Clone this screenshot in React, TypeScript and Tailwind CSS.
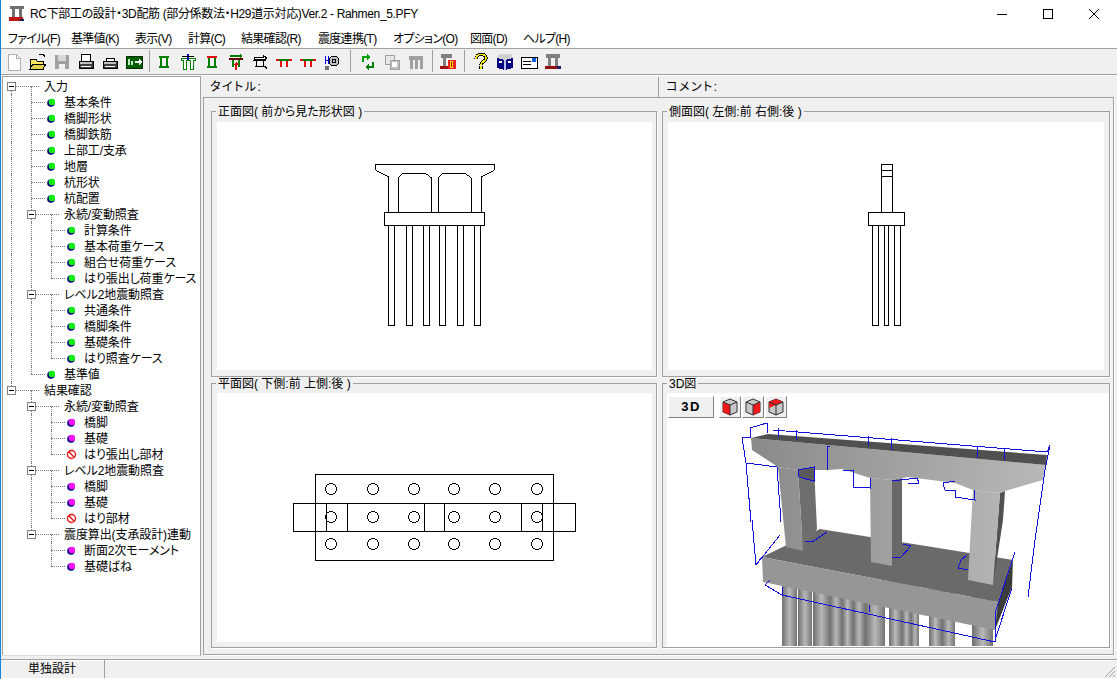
import type { ReactNode } from 'react';

type Mark = 'green' | 'pink' | 'no';
interface TreeItem {
  label: string;
  mark?: Mark;
  children?: TreeItem[];
}

const tree: TreeItem[] = [
  {
    label: '入力',
    children: [
      { label: '基本条件', mark: 'green' },
      { label: '橋脚形状', mark: 'green' },
      { label: '橋脚鉄筋', mark: 'green' },
      { label: '上部工/支承', mark: 'green' },
      { label: '地層', mark: 'green' },
      { label: '杭形状', mark: 'green' },
      { label: '杭配置', mark: 'green' },
      {
        label: '永続/変動照査',
        children: [
          { label: '計算条件', mark: 'green' },
          { label: '基本荷重ケース', mark: 'green' },
          { label: '組合せ荷重ケース', mark: 'green' },
          { label: 'はり張出し荷重ケース', mark: 'green' },
        ],
      },
      {
        label: 'レベル2地震動照査',
        children: [
          { label: '共通条件', mark: 'green' },
          { label: '橋脚条件', mark: 'green' },
          { label: '基礎条件', mark: 'green' },
          { label: 'はり照査ケース', mark: 'green' },
        ],
      },
      { label: '基準値', mark: 'green' },
    ],
  },
  {
    label: '結果確認',
    children: [
      {
        label: '永続/変動照査',
        children: [
          { label: '橋脚', mark: 'pink' },
          { label: '基礎', mark: 'pink' },
          { label: 'はり張出し部材', mark: 'no' },
        ],
      },
      {
        label: 'レベル2地震動照査',
        children: [
          { label: '橋脚', mark: 'pink' },
          { label: '基礎', mark: 'pink' },
          { label: 'はり部材', mark: 'no' },
        ],
      },
      {
        label: '震度算出(支承設計)連動',
        children: [
          { label: '断面2次モーメント', mark: 'pink' },
          { label: '基礎ばね', mark: 'pink' },
        ],
      },
    ],
  },
];

const menus = [
  { label: 'ファイル(F)', w: 'w-[63px]' },
  { label: '基準値(K)', w: 'w-[64px]' },
  { label: '表示(V)', w: 'w-[53px]' },
  { label: '計算(C)', w: 'w-[53px]' },
  { label: '結果確認(R)', w: 'w-[77px]' },
  { label: '震度連携(T)', w: 'w-[75px]' },
  { label: 'オプション(O)', w: 'w-[77px]' },
  { label: '図面(D)', w: 'w-[53px]' },
  { label: 'ヘルプ(H)', w: 'w-[60px]' },
];

function MarkIcon({ mark }: { mark: Mark }) {
  if (mark === 'no') {
    return (
      <svg width="11" height="11" viewBox="0 0 11 11" className="block">
        <circle cx="5.5" cy="5.5" r="4" fill="#fff" stroke="#f01010" strokeWidth="1.3" />
        <path d="M2.8 2.8L8.2 8.2" stroke="#f01010" strokeWidth="1.3" />
      </svg>
    );
  }
  return (
    <svg width="9" height="9" viewBox="0 0 9 9" className="block">
      <circle cx="4" cy="5" r="3.8" fill="#000080" />
      <circle cx="4.9" cy="4" r="3.2" fill={mark === 'green' ? '#10f010' : '#ff10ff'} />
    </svg>
  );
}

function TreeRows({ items, depth, guides }: { items: TreeItem[]; depth: number; guides: boolean[] }) {
  return (
    <>
      {items.map((item, i) => {
        const hasNext = i < items.length - 1;
        const up = depth > 0 || i > 0;
        return (
          <div key={item.label + i}>
            <div className="flex h-4">
              {guides.map((g, k) => (
                <span key={k} className="relative w-5 shrink-0">
                  {g && <span className="absolute left-2 top-0 h-4 border-l border-dotted border-[#808080]" />}
                </span>
              ))}
              <span className="relative w-5 shrink-0">
                {up && <span className="absolute left-2 top-0 h-2 border-l border-dotted border-[#808080]" />}
                {hasNext && <span className="absolute left-2 top-2 h-2 border-l border-dotted border-[#808080]" />}
                <span className={`absolute left-2 top-2 border-t border-dotted border-[#808080] ${item.children ? 'w-7' : 'w-[14px]'}`} />
                {item.children && <span className="absolute left-[28px] top-2 h-2 border-l border-dotted border-[#808080]" />}
                {item.children && (
                  <span className="absolute left-[4px] top-[4px] flex h-[9px] w-[9px] items-center justify-center border border-[#808080] bg-white">
                    <span className="h-px w-[5px] bg-black" />
                  </span>
                )}
                {item.mark && (
                  <span className="absolute left-[28px] top-2 flex h-0 w-0 items-center justify-center">
                    <span className="shrink-0">
                      <MarkIcon mark={item.mark} />
                    </span>
                  </span>
                )}
              </span>
              <span className="ml-[21px] whitespace-nowrap pt-px text-[12px] leading-4 tracking-[-0.1px] text-black">{item.label}</span>
            </div>
            {item.children && <TreeRows items={item.children} depth={depth + 1} guides={[...guides, hasNext]} />}
          </div>
        );
      })}
    </>
  );
}

function Ico({ children }: { children: ReactNode }) {
  return (
    <span className="flex h-6 w-6 shrink-0 items-center justify-center">
      <svg width="18" height="18" viewBox="0 0 18 18" shapeRendering="crispEdges">
        {children}
      </svg>
    </span>
  );
}

function Sep({ w }: { w: string }) {
  return (
    <span className={`flex h-6 shrink-0 justify-center ${w}`}>
      <span className="h-[22px] w-px bg-[#a0a0a0]" />
    </span>
  );
}

function Printer({ flat }: { flat?: boolean }) {
  return (
    <Ico>
      {!flat && <path d="M5 1h9l-1 8H4z" fill="#fff" stroke="#000" />}
      {flat && <path d="M5 5h8v3H5z" fill="#fff" stroke="#000" />}
      <path d="M2 8h14v7H2z" fill="#404040" stroke="#000" />
      <path d="M3 9h12v2H3z" fill="#c0c0c0" />
      <path d="M4 13h10v1H4z" fill="#fff" />
    </Ico>
  );
}

function Toolbar() {
  const g = '#008000';
  const r = '#e01010';
  return (
    <div className="flex h-[26px] items-center border-t border-[#a0a0a0] bg-[#f0f0f0] pl-[1px]">
      <Ico><path d="M3 1h8l4 4v12H3z" fill="#fff" stroke="#b0b0b0" /><path d="M11 1v4h4" fill="none" stroke="#b0b0b0" /></Ico>
      <Ico><path d="M1 6h6l1 2h6v8H1z" fill="#ffe860" stroke="#000" /><path d="M4 11h13l-3 5H1z" fill="#e0d050" stroke="#000" /><path d="M10 1h4l2 3" fill="none" stroke="#000" /></Ico>
      <Ico><path d="M2 2h14v14H2z" fill="#a0a0a0" /><path d="M5 2h8v6H5z" fill="#d8d8d8" /><path d="M6 11h6v5H6z" fill="#f0f0f0" /></Ico>
      <Printer />
      <Printer flat />
      <Ico><path d="M1 3h16v12H1z" fill="#006000" stroke="#003000" /><path d="M3 6h2v6H3zM6 8h2v4H6z" fill="#c0f0c0" /><path d="M10 8h4V6l3 3-3 3v-2h-4z" fill="#fff" /></Ico>
      <Sep w="w-[6px]" />
      <Ico><path d="M4 4h10M4 14h10M6 4v10M12 4v10" fill="none" stroke={g} strokeWidth="2" /></Ico>
      <Ico><path d="M2 5h14v2H2z" fill="#fff" stroke={g} /><path d="M4 7v9h3V7M11 7v9h3V7" fill="#fff" stroke={g} /><path d="M8 1h2v6H8z" fill="#0000c0" /><path d="M3 3h12" stroke="#000" /></Ico>
      <Ico><path d="M4 4h10" stroke={r} strokeWidth="2" /><path d="M4 14h10M6 5v9M12 5v9" fill="none" stroke={g} strokeWidth="2" /></Ico>
      <Ico><path d="M2 5h14v2H2z" fill="#700000" /><path d="M5 7h2v7H5zM11 7h2v7h-2z" fill={g} /><path d="M3 2h10v-1l3 2-3 2v-1H3z" fill={g} /><path d="M9 9l3 3h-2v5H8v-5H6z" fill={r} /></Ico>
      <Ico><path d="M2 7h13M5 7v7M12 7v7" fill="none" stroke="#000" /><path d="M3 4h9V2l4 3-4 3V6H3z" fill="#fff" stroke="#000" /><path d="M4 13h10l2 3" fill="none" stroke="#000" /></Ico>
      <Ico><path d="M2 6h14v2H2z" fill={g} /><path d="M1 6h3v2H1zM14 6h3v2h-3z" fill={r} /><path d="M5 8h2v6H5zM11 8h2v6h-2z" fill={r} /></Ico>
      <Ico><path d="M2 6h14v2H2z" fill={g} /><path d="M1 6h3v2H1zM14 6h3v2h-3z" fill={r} /><path d="M5 8h2v6H5zM11 8h2v6h-2z" fill={r} /></Ico>
      <Ico><path d="M2 3v8M5 3v8M2 7h3" stroke="#0000e0" fill="none" /><circle cx="11" cy="8" r="5" fill="#c0c0c0" stroke="#000" /><circle cx="11" cy="8" r="2" fill="none" stroke="#000" /><path d="M2 13h4v4H2z" fill="#707070" /></Ico>
      <Sep w="w-3" />
      <Ico><path d="M4 9V4h5" fill="none" stroke="#00a000" strokeWidth="2" /><path d="M8 1l4 3-4 3z" fill="#00a000" /><path d="M14 9v5H9" fill="none" stroke="#008000" strokeWidth="2" /><path d="M10 11l-4 3 4 3z" fill="#008000" /></Ico>
      <Ico><path d="M2 2h9v9H2z" fill="#e8e8e8" stroke="#a0a0a0" /><path d="M7 7h9v9H7z" fill="#c0c0c0" stroke="#a0a0a0" /><path d="M9 9h5v5H9z" fill="#fff" /></Ico>
      <Ico><path d="M2 3h14v4H2zM3 7h3v9H3zM8 7h3v9H8zM13 7h3v9h-3z" fill="#a0a0a0" /></Ico>
      <Sep w="w-2" />
      <Ico><path d="M2 1h11v4H2zM4 5h3v8H4z" fill="#808080" /><path d="M1 13h16v3H1z" fill="#a01010" /><path d="M9 7h8v9H9z" fill="#f02020" /><path d="M11 8h3v7h-3z" fill="#ffe000" /><path d="M12 9h1v5h-1z" fill="#a01010" /></Ico>
      <Sep w="w-[9px]" />
      <Ico><path d="M4 6c0-6 10-6 10-1 0 4-5 3-5 7M9 13v3" fill="none" stroke="#000" strokeWidth="3.4" /><path d="M4 6c0-6 10-6 10-1 0 4-5 3-5 7M9 13v3" fill="none" stroke="#f8f000" strokeWidth="1.6" /></Ico>
      <Ico><path d="M1 5l8 2 8-2v10l-8 2-8-2z" fill="#000080" /><path d="M3 1h12l2 4-8 2-8-2z" fill="#d0d0d0" /><path d="M8 7h2v10H8z" fill="#c0c0f0" /><path d="M3 8h3v2H3zM12 8h3v2h-3z" fill="#fff" /></Ico>
      <Ico><path d="M1 4h16v11H1z" fill="#fff" stroke="#000" /><path d="M3 8h8v1H3zM3 11h8v1H3z" fill="#000" /><path d="M12 5h4v4h-4z" fill="#1060e0" /></Ico>
      <Ico><path d="M2 1h14v4H2zM4 5h3v8H4zM11 5h3v8h-3z" fill="#808080" /><path d="M1 13h13v3H1z" fill="#901010" /><path d="M13 13h4v3h-4z" fill="#202060" /></Ico>
    </div>
  );
}

function GroupBox({ title, children, className }: { title: string; children: ReactNode; className?: string }) {
  return (
    <div className={`relative border border-[#a0a0a0] shadow-[1px_1px_0_#fff] ${className ?? ''}`}>
      <span className="absolute left-[4px] top-[-7px] whitespace-nowrap bg-[#f0f0f0] px-[2px] text-[12px] leading-[15px]">{title}</span>
      {children}
    </div>
  );
}

function Canvas({ viewBox, children }: { viewBox: string; children: ReactNode }) {
  return (
    <svg viewBox={viewBox} className="block h-full w-full bg-white" fill="white" stroke="black" strokeWidth="1" shapeRendering="crispEdges">
      {children}
    </svg>
  );
}

function FrontView() {
  const pileX = [388, 406, 423, 439, 457, 474];
  return (
    <Canvas viewBox="217 122 435 249">
      <path d="M375.5 164.5H494.5V170.5L481.5 177V212M375.5 164.5V170.5L388.5 177V212" fill="none" />
      <path d="M398.5 212V178L403 173.5H425L431.5 178V212M438.5 212V178L443 173.5H465L471.5 178V212" fill="none" />
      <rect x="384.5" y="212.5" width="100" height="13" fill="none" />
      {pileX.map((x) => (
        <rect key={x} x={x + 0.5} y="225.5" width="6" height="101" fill="none" />
      ))}
    </Canvas>
  );
}

function SideView() {
  return (
    <Canvas viewBox="668 122 436 249">
      <rect x="881.5" y="164.5" width="11" height="48" fill="none" />
      <path d="M881 170.5H893M881 176.5H893" fill="none" />
      <rect x="868.5" y="212.5" width="36" height="13" fill="none" />
      <rect x="872.5" y="225.5" width="6" height="101" fill="none" />
      <rect x="884.5" y="225.5" width="4" height="101" fill="none" />
      <rect x="894.5" y="225.5" width="6" height="101" fill="none" />
    </Canvas>
  );
}

function PlanView() {
  const cx = [331, 373, 414, 454, 495, 537];
  const cy = [489, 517, 544];
  const bars = [326, 347, 424, 444, 521, 542];
  return (
    <Canvas viewBox="217 393 435 249">
      <rect x="315.5" y="474.5" width="238" height="86" fill="none" />
      <rect x="293.5" y="503.5" width="282" height="28" fill="none" />
      {bars.map((x) => (
        <path key={x} d={`M${x + 0.5} 503V532`} fill="none" />
      ))}
      {cy.map((y) => cx.map((x) => <circle key={`${x}-${y}`} cx={x} cy={y} r="5.5" fill="none" />))}
    </Canvas>
  );
}

function Cube({ kind }: { kind: number }) {
  return (
    <span className="flex h-[22px] w-[22px] items-center justify-center border border-b-[#808080] border-l-white border-r-[#808080] border-t-white bg-[#f0f0f0]">
      <svg width="18" height="18" viewBox="0 0 18 18">
        <path d="M9 1l7 3v10l-7 3-7-3V4z" fill="#c8c8c8" stroke="#303030" />
        {kind === 0 && <path d="M2 4l7 3v10l-7-3z" fill="#f01818" />}
        {kind === 1 && <path d="M16 4L9 7v10l7-3z" fill="#f01818" />}
        {kind === 2 && <path d="M2 4l7-3v6L2 10zM9 1l7 3-7 3z" fill="#f01818" />}
        <path d="M2 4l7 3 7-3M9 7v10" fill="none" stroke="#303030" />
      </svg>
    </span>
  );
}

function View3D() {
  const pileX: [number, number][] = [
    [782, 15], [798, 14], [813, 17], [830, 12], [842, 11], [853, 12], [865, 20], [889, 13], [902, 9], [911, 8], [929, 13], [942, 13], [972, 21],
  ];
  const blue = [
    '750,428 767,423 768,433', '750,428 751,438', '773,430 1047,452 1050,445 1045,470 1035,540 1028,597',
    '778,428 778,437', '796,430 796,440', '868,436 868,446', '891,438 891,450', '977,447 977,458', '1004,449 1004,460',
    '742,437 750,437', '742,437 746,463 751,522', '746,463 777,467 781,522', '752,520 756,565 780,535',
    '827,447 828,470', '827,447 830,446', '843,470 853,470 853,487 870,488 870,478', '798,470 814,467 814,481 799,477 798,470',
    '892,481 917,478 919,483 908,484', '955,481 943,483 945,490 955,490 955,497 975,500 974,490',
    '782,595 995,642', '765,585 782,595 782,587', '765,585 770,580', '995,642 995,613 1015,552', '995,640 1012,588',
    '805,541 812,542 827,532', '892,557 900,558 911,546 903,544', '958,568 968,570', '958,568 961,560 967,555', '756,565 762,557',
    '869,605 869,612',
  ];
  return (
    <svg viewBox="667 393 442 254" className="block h-full w-full bg-white">
      <defs>
        <linearGradient id="pile">
          <stop offset="0" stopColor="#6e6e6e" />
          <stop offset="0.5" stopColor="#b8b8b8" />
          <stop offset="1" stopColor="#747474" />
        </linearGradient>
        <linearGradient id="beam" gradientUnits="userSpaceOnUse" x1="751" y1="0" x2="1046" y2="0">
          <stop offset="0" stopColor="#8a8a8a" />
          <stop offset="1" stopColor="#b8b8b8" />
        </linearGradient>
        <linearGradient id="col" gradientUnits="userSpaceOnUse" x1="778" y1="0" x2="1000" y2="0">
          <stop offset="0" stopColor="#8e8e8e" />
          <stop offset="1" stopColor="#b4b4b4" />
        </linearGradient>
      </defs>
      {pileX.map(([x, w]) => (
        <rect key={x} x={x} y="580" width={w} height="66" fill="url(#pile)" />
      ))}
      <polygon points="762,557 820,529 1013,560 998,602" fill="#6a6a6a" />
      <polygon points="762,557 998,602 995,630 763,582" fill="#969696" />
      <polygon points="998,602 1013,560 1012,587 995,630" fill="#3c3c3c" />
      <polygon points="798,470 814,467 817,529 803,551" fill="#6e6e6e" />
      <polygon points="778,467 798,470 803,551 786,547" fill="url(#col)" />
      <polygon points="892,480 902,478 902,552 892,566" fill="#686868" />
      <polygon points="870,478 892,480 892,566 871,562" fill="url(#col)" />
      <polygon points="1000,493 1005,491 1003,520 993,585" fill="#505050" />
      <polygon points="973,490 1000,493 993,585 968,580" fill="url(#col)" />
      <polygon points="751,438 1046,465 1043,480 1005,491 1000,493 973,490 955,483 908,477 892,480 870,478 842,469 827,470 798,470 778,467 752,450" fill="url(#beam)" />
      <polygon points="751,438 768,434 1047,455 1046,465" fill="#505050" />
      <polygon points="798,470 814,467 814,481 799,477" fill="#5a5a5a" />
      {blue.map((p) => (
        <polyline key={p} points={p} fill="none" stroke="#1010e0" strokeWidth="1" shapeRendering="crispEdges" />
      ))}
    </svg>
  );
}

export default function App() {
  return (
    <div className="flex h-[679px] w-[1117px] flex-col overflow-hidden border-l border-[#1883d7] bg-[#f0f0f0] font-['Liberation_Sans','Noto_Sans_CJK_JP',sans-serif] text-black [font-feature-settings:'palt']">
      <div className="flex h-7 shrink-0 items-center bg-white">
        <span className="ml-[7px] mr-[4px]">
          <svg width="18" height="18" viewBox="0 0 18 18" shapeRendering="crispEdges">
            <path d="M2 1h14v3H2zM4 4h3v9H4zM11 4h3v9h-3z" fill="#707070" />
            <path d="M1 12h14v4H1z" fill="#c01818" />
            <path d="M12 14h4v2h-4z" fill="#202060" />
          </svg>
        </span>
        <span className="whitespace-nowrap text-[12px] tracking-[-0.35px] text-[#000]">RC下部工の設計・3D配筋 (部分係数法・H29道示対応)Ver.2 - Rahmen_5.PFY</span>
        <span className="ml-auto flex h-7 items-center">
          <span className="flex w-[46px] justify-center"><span className="h-px w-[10px] bg-black" /></span>
          <span className="flex w-[46px] justify-center"><span className="h-[10px] w-[10px] border border-black" /></span>
          <span className="flex w-[46px] justify-center">
            <svg width="10" height="10" viewBox="0 0 10 10"><path d="M0 0L10 10M10 0L0 10" stroke="#000" strokeWidth="1" /></svg>
          </span>
        </span>
      </div>
      <div className="flex h-5 shrink-0 items-center bg-white pl-[7px] pt-px text-[12px] leading-5 tracking-[-0.7px]">
        {menus.map((m) => (
          <span key={m.label} className={`shrink-0 whitespace-nowrap ${m.w}`}>{m.label}</span>
        ))}
      </div>
      <Toolbar />
      <div className="flex min-h-0 flex-1 border-t border-[#a0a0a0] pt-px shadow-[inset_0_1px_0_#fff]">
        <div className="ml-[1px] h-[580px] w-[199px] shrink-0 overflow-hidden border-b border-r border-t border-b-[#d8d8d8] border-r-[#a0a0a0] border-t-[#a0a0a0] bg-white pt-[1px] shadow-[inset_1px_0_0_#a0a0a0]">
          <div className="pl-[1px]">
            <TreeRows items={tree} depth={0} guides={[]} />
          </div>
        </div>
        <div className="ml-[2px] flex w-[911px] shrink-0 flex-col">
          <div className="flex h-[21px] shrink-0 pt-px text-[12px] leading-[21px] tracking-[1.5px]">
            <div className="w-[455px] pl-[7px]">タイトル:</div>
            <div className="w-px bg-[#a0a0a0]" />
            <div className="pl-[7px]">コメント:</div>
          </div>
          <div className="h-[558px] border border-[#a0a0a0] shadow-[1px_1px_0_#fff]">
            <div className="grid grid-cols-[446px_448px] grid-rows-[266px_265px] gap-x-[5px] gap-y-[6px] pl-[7px] pt-[13px]">
              <GroupBox title="正面図( 前から見た形状図 )" className="pb-[6px] pl-[5px] pr-[4px] pt-[10px]">
                <FrontView />
              </GroupBox>
              <GroupBox title="側面図( 左側:前 右側:後 )" className="pb-[6px] pl-[5px] pr-[5px] pt-[10px]">
                <SideView />
              </GroupBox>
              <GroupBox title="平面図( 下側:前 上側:後 )" className="pb-[5px] pl-[5px] pr-[4px] pt-[9px]">
                <PlanView />
              </GroupBox>
              <GroupBox title="3D図" className="pb-0 pl-[4px] pr-0 pt-[9px]">
                <div className="relative h-full w-full">
                  <View3D />
                  <div className="absolute left-[1px] top-[3px] flex items-center gap-px">
                    <span className="mr-[4px] flex h-[22px] w-[46px] items-center justify-center border border-b-[#808080] border-l-white border-r-[#808080] border-t-white bg-[#f0f0f0] text-[13px] font-bold tracking-[1.5px]">3D</span>
                    <Cube kind={0} />
                    <Cube kind={1} />
                    <Cube kind={2} />
                  </div>
                </div>
              </GroupBox>
            </div>
          </div>
        </div>
      </div>
      <div className="flex h-5 shrink-0 border-b border-t border-b-white border-t-[#a0a0a0] text-[12px] leading-[19px] shadow-[inset_0_1px_0_#fff]">
        <div className="w-[101px] pl-[27px]">単独設計</div>
        <div className="relative ml-[2px] flex-1 border-l border-[#a0a0a0]">
          <svg width="14" height="14" viewBox="0 0 14 14" className="absolute bottom-0 right-[1px]">
            <path d="M13 3L3 13M13 7L7 13M13 11L11 13" stroke="#a0a0a0" fill="none" />
          </svg>
        </div>
      </div>
    </div>
  );
}
